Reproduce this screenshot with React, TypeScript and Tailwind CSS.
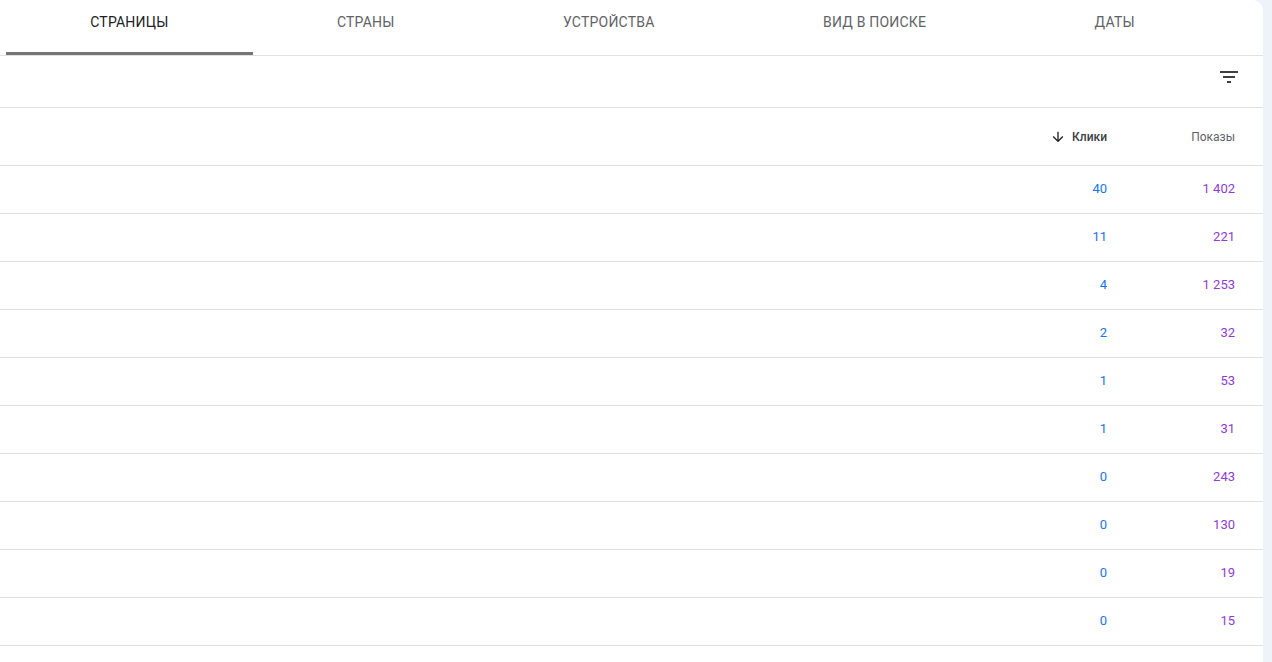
import React from 'react';

const tabs = ['Страницы', 'Страны', 'Устройства', 'Вид в поиске', 'Даты'];

const rows: [string, string][] = [
  ['40', '1 402'],
  ['11', '221'],
  ['4', '1 253'],
  ['2', '32'],
  ['1', '53'],
  ['1', '31'],
  ['0', '243'],
  ['0', '130'],
  ['0', '19'],
  ['0', '15'],
];

function FilterIcon() {
  return (
    <svg width="24" height="24" viewBox="0 0 24 24" fill="#3c4043">
      <path d="M10 18h4v-2h-4v2zM3 6v2h18V6H3zm3 7h12v-2H6v2z" />
    </svg>
  );
}

function ArrowDownIcon() {
  return (
    <svg width="16" height="16" viewBox="0 0 24 24" fill="#202124">
      <path d="M20 12l-1.41-1.41L13 16.17V4h-2v12.17l-5.58-5.59L4 12l8 8 8-8z" />
    </svg>
  );
}

export default function App() {
  return (
    <div className="min-h-screen bg-[#eef2f9] flex font-['Roboto','Liberation_Sans',sans-serif]">
      <div className="w-[1263px] bg-white rounded-tr-[10px] flex flex-col">
        {/* вкладки */}
        <div className="flex pl-[6px] pr-[44px] border-b border-[#e0e0e0]">
          {tabs.map((t, i) => (
            <button
              key={t}
              className={`grow basis-auto h-[55px] pb-[8px] text-[14px] font-normal uppercase tracking-[0.2px] ${
                i === 0 ? 'text-[#202124] border-b-[3px] border-[#757575]' : 'text-[#5f6368] border-b-[3px] border-transparent'
              }`}
            >
              {t}
            </button>
          ))}
        </div>

        {/* фильтр */}
        <div className="h-[52px] flex justify-end items-start pt-[9px] pr-[22px] border-b border-[#e0e0e0]">
          <FilterIcon />
        </div>

        {/* заголовок таблицы */}
        <div className="h-[58px] flex items-center border-b border-[#e0e0e0] text-[12px]">
          <div className="flex-1" />
          <div className="w-[128px] pr-[28px] flex justify-end items-center gap-[6px] font-medium text-[#3c4043]">
            <ArrowDownIcon />
            <span>Клики</span>
          </div>
          <div className="w-[128px] pr-[28px] text-right text-[#5f6368]">Показы</div>
        </div>

        {rows.map(([clicks, shows], i) => (
          <div key={i} className="h-[48px] flex items-center pb-[2px] border-b border-[#e0e0e0] text-[13px]">
            <div className="flex-1" />
            <div className="w-[128px] pr-[28px] text-right text-[#1a73e8]">{clicks}</div>
            <div className="w-[128px] pr-[28px] text-right text-[#8f3bd6]">{shows}</div>
          </div>
        ))}
      </div>
    </div>
  );
}
